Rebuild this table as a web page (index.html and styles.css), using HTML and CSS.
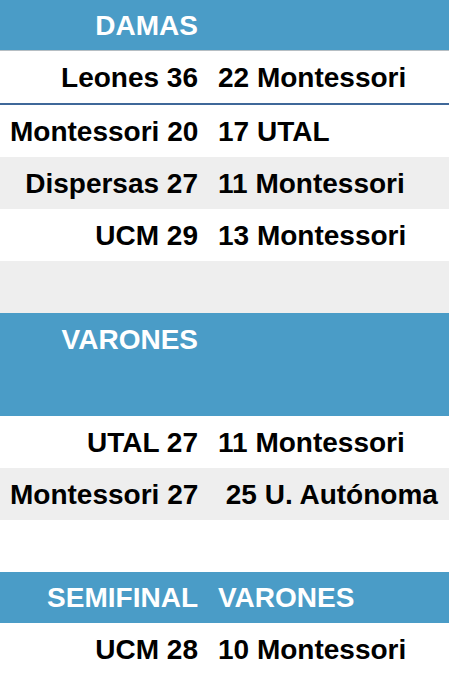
FILE: index.html
```html
<!DOCTYPE html>
<html lang="es">
<head>
<meta charset="utf-8">
<title>Resultados</title>
<link rel="stylesheet" href="styles.css">
</head>
<body>
<div class="table">
  <div class="row head first"><div class="l">DAMAS</div><div class="r"></div></div>
  <div class="row sep"><div class="l">Leones 36</div><div class="r">22 Montessori</div></div>
  <div class="row"><div class="l">Montessori 20</div><div class="r">17 UTAL</div></div>
  <div class="row alt"><div class="l">Dispersas 27</div><div class="r">11 Montessori</div></div>
  <div class="row"><div class="l">UCM 29</div><div class="r">13 Montessori</div></div>
  <div class="row alt"><div class="l"></div><div class="r"></div></div>
  <div class="row head tall"><div class="l">VARONES</div><div class="r"></div></div>
  <div class="row"><div class="l">UTAL 27</div><div class="r">11 Montessori</div></div>
  <div class="row alt"><div class="l">Montessori 27</div><div class="r">&nbsp;25 U. Autónoma</div></div>
  <div class="row"><div class="l"></div><div class="r"></div></div>
  <div class="row head short"><div class="l">SEMIFINAL</div><div class="r">VARONES</div></div>
  <div class="row"><div class="l">UCM 28</div><div class="r">10 Montessori</div></div>
</div>
</body>
</html>
```

FILE: styles.css
```css
html, body {
  margin: 0;
  padding: 0;
  background: #ffffff;
}
body {
  font-family: "Liberation Sans", Arial, sans-serif;
  font-weight: bold;
  font-size: 28px;
  color: #000;
}
.table {
  width: 449px;
}
.row {
  display: grid;
  grid-template-columns: 208px 1fr;
  height: 52px;
  align-items: center;
  line-height: 32px;
  background: #ffffff;
}
.row.alt {
  background: #eeeeee;
}
.row .l {
  text-align: right;
  padding: 1px 10px 0;
  white-space: nowrap;
}
.row .r {
  text-align: left;
  padding: 1px 10px 0;
  white-space: nowrap;
}
.row.head {
  background: #4a9cc7;
  color: #ffffff;
}
.row.head.first {
  height: 50px;
  border-bottom: 1px solid #b6bec3;
}
.row.head.tall {
  height: 103px;
  align-items: start;
  padding-top: 10px;
  box-sizing: border-box;
}
.row.head.short {
  height: 51px;
}
.row.sep {
  border-bottom: 2px solid #3f6899;
}
```
